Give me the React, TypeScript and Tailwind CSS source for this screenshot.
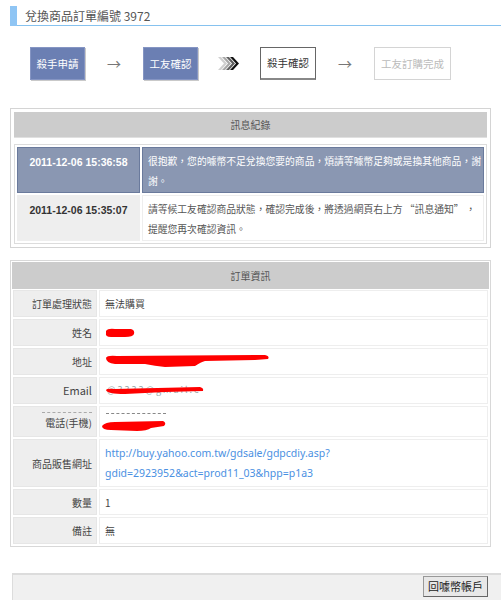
import React from "react";

const font = { fontFamily: '"Noto Sans CJK TC", "Noto Sans", sans-serif' };

// 紅筆塗改
function Scribble({ w, h, d }: { w: number; h: number; d: string }) {
  return (
    <svg width={w} height={h} viewBox={`0 0 ${w} ${h}`} className="block">
      <path d={d} fill="#ff0000" />
    </svg>
  );
}

function Arrow() {
  return <span className="mx-[22px] text-[14px] text-[#777]">→</span>;
}

function Chevrons() {
  const colors = ["#d0d0d0", "#a8a8a8", "#606060", "#111"];
  return (
    <svg width="22" height="13" viewBox="0 0 22 13" className="mx-[20px]">
      {colors.map((c, i) => (
        <path key={i} d={`M${i * 4} 0 L${i * 4 + 6} 6.5 L${i * 4} 13 L${i * 4 + 3} 13 L${i * 4 + 9} 6.5 L${i * 4 + 3} 0 Z`} fill={c} />
      ))}
    </svg>
  );
}

const messages = [
  {
    time: "2011-12-06 15:36:58",
    lines: ["很抱歉，您的噱幣不足兌換您要的商品，煩請等噱幣足夠或是換其他商品，謝", "謝。"],
    active: true,
  },
  {
    time: "2011-12-06 15:35:07",
    lines: ["請等候工友確認商品狀態，確認完成後，將透過網頁右上方 “訊息通知” ，", "提醒您再次確認資訊。"],
    active: false,
  },
];

export default function App() {
  return (
    <div className="w-[501px] h-[600px] bg-white text-[#555] overflow-hidden" style={font}>
      {/* 標題 */}
      <div className="flex pt-[6px] pl-[10px]">
        <div className="w-[7px] h-[20px] bg-[#8fc5f4]" />
        <div className="flex-1 border-b border-[#86c2ef] h-[20px] pl-[8px] text-[12px] leading-[19px] text-[#555]">
          兌換商品訂單編號 3972
        </div>
      </div>

      {/* 流程 */}
      <div className="flex items-center pl-[30px] mt-[21px] text-[10.5px]">
        <div className="w-[55px] h-[33px] flex items-center justify-center bg-[#6b7fb3] text-white border border-[#8595c3] shadow-[1px_1px_0_#c9c9c9]">
          殺手申請
        </div>
        <Arrow />
        <div className="w-[55px] h-[33px] flex items-center justify-center bg-[#6b7fb3] text-white border border-[#8595c3] shadow-[1px_1px_0_#c9c9c9]">
          工友確認
        </div>
        <Chevrons />
        <div className="w-[56px] h-[33px] flex items-center justify-center bg-white text-[#333] border border-[#666] border-b-2 border-b-[#888]">
          殺手確認
        </div>
        <Arrow />
        <div className="w-[77px] h-[33px] flex items-center justify-center bg-white text-[#bbb] border border-[#d4d4d4]">
          工友訂購完成
        </div>
      </div>

      {/* 訊息紀錄 */}
      <div className="mx-[10px] mt-[28px] w-[481px] border border-[#d4d4d4] p-[3px]">
        <div className="h-[26px] bg-[#cccccc] border-b border-[#e0e0e0] flex items-center justify-center text-[10px] text-[#555]">
          訊息紀錄
        </div>
        <table className="mt-[6px] w-full border-separate border-spacing-[2px] border border-[#dcdcdc] text-[9.8px]">
          <tbody>
            {messages.map((m) => (
              <tr key={m.time}>
                <td
                  className={`w-[123px] h-[46px] align-top pt-[7px] text-center font-bold text-[10.5px] border ${
                    m.active ? "bg-[#8a97b2] border-[#6a7a9c] text-white" : "bg-[#eeeeee] border-[#eeeeee] text-[#333]"
                  }`}
                  style={{ fontFamily: '"Liberation Sans", sans-serif' }}
                >
                  {m.time}
                </td>
                <td
                  className={`align-top pl-[5px] pr-[2px] pt-[3px] leading-[20px] whitespace-nowrap border ${
                    m.active ? "bg-[#8a97b2] border-[#6a7a9c] text-white" : "bg-white border-[#eeeeee] text-[#555]"
                  }`}
                >
                  {m.lines[0]}
                  <br />
                  {m.lines[1]}
                </td>
              </tr>
            ))}
          </tbody>
        </table>
      </div>

      {/* 訂單資訊 */}
      <div className="mx-[10px] mt-[12px] w-[481px] border border-[#d8d8d8] pt-[1px]">
        <div className="mx-[1px] h-[27px] bg-[#cccccc] flex items-center justify-center text-[10px] text-[#555]">
          訂單資訊
        </div>
        <table className="w-full border-separate border-spacing-x-[2px] border-spacing-y-[2px] text-[10px] -mt-[1px]">
          <tbody>
            <Row label="訂單處理狀態" h={27}>
              <span className="text-[#444]">無法購買</span>
            </Row>
            <Row label="姓名" h={27}>
              <Scribble w={30} h={10} d="M1 3 Q3 0 10 1 L26 1 Q30 2 29 6 Q28 9 20 9 L6 9 Q0 9 1 5 Z" />
            </Row>
            <Row label="地址" h={27}>
              <Scribble
                w={165}
                h={15}
                d="M1 4 Q2 1 12 2 L160 1 Q165 2 163 5 L150 6 L100 7 Q96 8 90 12 L60 13 Q50 12 40 10 L10 10 Q1 9 1 4 Z"
              />
            </Row>
            <Row label="Email" h={27} labelFont>
              <div className="relative h-[10px] w-[100px]">
                <span className="absolute left-[2px] top-[-1px] text-[9px] tracking-[2px] text-[#9aa] leading-none">@3333@gmail.c</span>
                <div className="absolute inset-0">
                  <Scribble w={100} h={10} d="M1 4 Q2 2 10 3 L95 1 Q99 2 98 5 L60 6 L20 8 Q2 8 1 4 Z" />
                </div>
              </div>
            </Row>
            <tr>
              <td className="w-[84px] h-[31px] bg-[#eeeeee] border border-[#e6e6e6] text-right pr-[4px] align-top">
                <div className="flex justify-end mt-[5px] mb-[3px]">
                  <div className="w-[50px] border-t border-dashed border-[#aaa]" />
                </div>
                <div className="leading-[14px] text-[#444]">電話(手機)</div>
              </td>
              <td className="bg-white border border-[#eeeeee] align-top pl-[1px]">
                <div className="mt-[6px] ml-[5px] w-[60px] border-t border-dashed border-[#888]" />
                <div className="mt-[6px]">
                  <Scribble w={66} h={12} d="M1 6 Q4 2 14 2 L62 1 Q66 3 63 6 L50 8 Q46 11 36 11 L10 10 Q1 10 1 6 Z" />
                </div>
              </td>
            </tr>
            <Row label="商品販售網址" h={47}>
              <a className="text-[#4a90e2] leading-[20px] block py-[3px] text-[10.5px]" style={{ fontFamily: '"Noto Sans", sans-serif' }}>
                http://buy.yahoo.com.tw/gdsale/gdpcdiy.asp?
                <br />
                gdid=2923952&amp;act=prod11_03&amp;hpp=p1a3
              </a>
            </Row>
            <Row label="數量" h={26}>
              <span className="text-[#444]">1</span>
            </Row>
            <Row label="備註" h={27}>
              <span className="text-[#444]">無</span>
            </Row>
          </tbody>
        </table>
      </div>

      {/* 底部 */}
      <div className="ml-[12px] mt-[26px] h-[30px] bg-[#f0f0f0] border-t-2 border-l border-[#dcdcdc] flex justify-end items-start pt-[1px] pr-[13px]">
        <button className="h-[21px] px-[4px] bg-[#e8e8e8] border border-[#999] border-b-[#666] border-r-[#666] text-[11px] text-[#222] leading-none">
          回噱幣帳戶
        </button>
      </div>
    </div>
  );
}

function Row({
  label,
  h,
  children,
  labelFont,
}: {
  label: string;
  h: number;
  children: React.ReactNode;
  labelFont?: boolean;
}) {
  return (
    <tr>
      <td
        className="w-[84px] bg-[#eeeeee] border border-[#e6e6e6] text-right pr-[4px] text-[#444]"
        style={{ height: h, ...(labelFont ? { fontSize: 11 } : {}) }}
      >
        {label}
      </td>
      <td className="bg-white border border-[#eeeeee] px-[5px]">{children}</td>
    </tr>
  );
}
